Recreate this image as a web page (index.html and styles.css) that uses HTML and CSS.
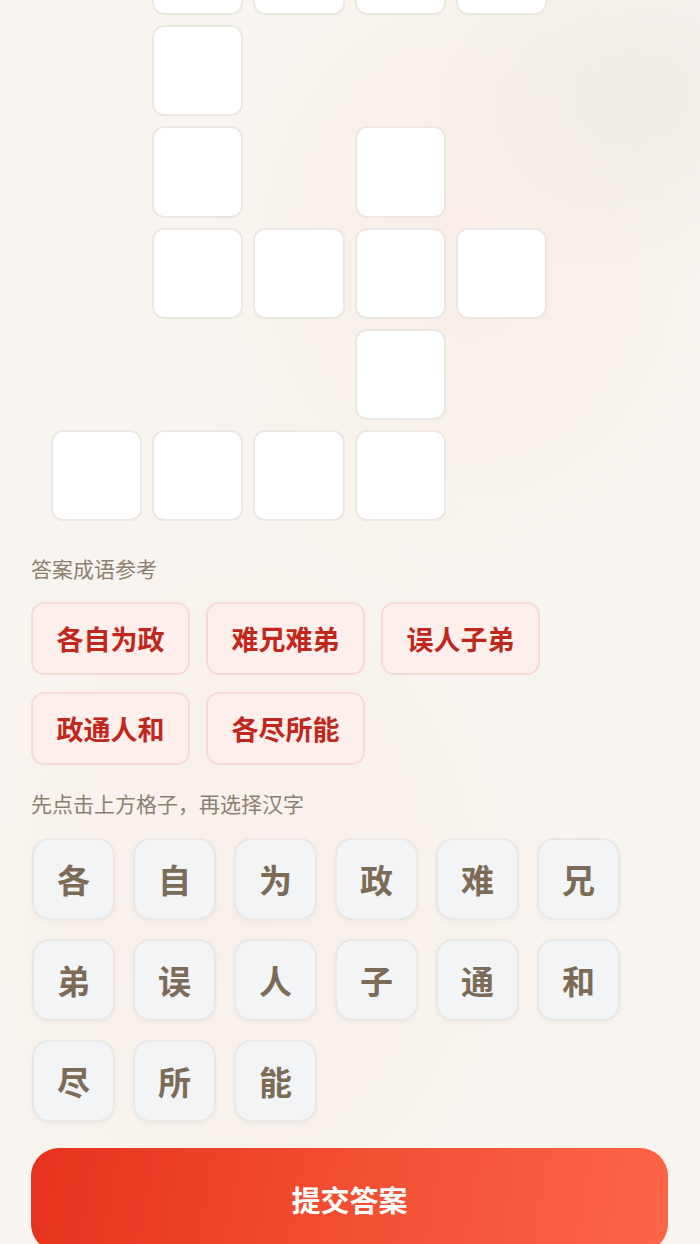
FILE: index.html
```html
<!DOCTYPE html>
<html lang="zh-CN">
<head>
<meta charset="utf-8">
<title>成语填字</title>
<link rel="stylesheet" href="styles.css">
</head>
<body>
<div class="page">
  <div class="board">
    <div class="slot"></div><div class="cell"></div><div class="cell"></div><div class="cell"></div><div class="cell"></div><div class="slot"></div>
    <div class="slot"></div><div class="cell"></div><div class="slot"></div><div class="slot"></div><div class="slot"></div><div class="slot"></div>
    <div class="slot"></div><div class="cell"></div><div class="slot"></div><div class="cell"></div><div class="slot"></div><div class="slot"></div>
    <div class="slot"></div><div class="cell"></div><div class="cell"></div><div class="cell"></div><div class="cell"></div><div class="slot"></div>
    <div class="slot"></div><div class="slot"></div><div class="slot"></div><div class="cell"></div><div class="slot"></div><div class="slot"></div>
    <div class="cell"></div><div class="cell"></div><div class="cell"></div><div class="cell"></div><div class="slot"></div><div class="slot"></div>
  </div>

  <div class="label label-answers">答案成语参考</div>
  <div class="tags">
    <span class="tag">各自为政</span>
    <span class="tag">难兄难弟</span>
    <span class="tag">误人子弟</span>
    <span class="tag">政通人和</span>
    <span class="tag">各尽所能</span>
  </div>

  <div class="label label-pick">先点击上方格子，再选择汉字</div>
  <div class="chars">
    <button class="char">各</button>
    <button class="char">自</button>
    <button class="char">为</button>
    <button class="char">政</button>
    <button class="char">难</button>
    <button class="char">兄</button>
    <button class="char">弟</button>
    <button class="char">误</button>
    <button class="char">人</button>
    <button class="char">子</button>
    <button class="char">通</button>
    <button class="char">和</button>
    <button class="char">尽</button>
    <button class="char">所</button>
    <button class="char">能</button>
  </div>

  <button class="submit">提交答案</button>
</div>
</body>
</html>
```

FILE: styles.css
```css
html, body {
  margin: 0;
  padding: 0;
}
body {
  width: 700px;
  height: 1244px;
  overflow: hidden;
  font-family: "Noto Sans CJK SC", "Noto Sans", sans-serif;
  background:
    radial-gradient(ellipse 240px 200px at 650px 90px, rgba(228, 224, 218, 0.45), rgba(228, 224, 218, 0) 100%),
    radial-gradient(ellipse 300px 360px at 470px 250px, rgba(250, 232, 224, 0.55), rgba(250, 232, 224, 0) 100%),
    radial-gradient(ellipse 380px 500px at 250px 900px, rgba(250, 234, 228, 0.5), rgba(250, 234, 228, 0) 100%),
    #f8f5f0;
}
.page {
  padding: 0 32px 0 31px;
}
.board {
  margin-top: -76px;
  padding: 0 20px;
  display: grid;
  grid-template-columns: repeat(6, 1fr);
  gap: 10px;
}
.cell {
  aspect-ratio: 1 / 1;
  box-sizing: border-box;
  background: #ffffff;
  border: 2px solid #ebe7e2;
  border-radius: 12px;
}
.slot {
  aspect-ratio: 1 / 1;
}
.label {
  font-size: 21px;
  line-height: 30px;
  color: #8c8072;
}
.label-answers {
  margin-top: 32px;
}
.tags {
  margin-top: 19px;
  display: flex;
  flex-wrap: wrap;
  gap: 17px 16px;
  width: 540px;
}
.tag {
  box-sizing: border-box;
  width: 159px;
  height: 73px;
  display: flex;
  align-items: center;
  justify-content: center;
  background: #fdefeb;
  border: 2px solid #f7dcd6;
  border-radius: 13px;
  color: #c0281d;
  font-size: 27px;
  font-weight: 700;
}
.label-pick {
  margin-top: 23px;
}
.chars {
  margin-top: 20px;
  padding-left: 1px;
  display: flex;
  flex-wrap: wrap;
  gap: 19px 18px;
  width: 600px;
}
.char {
  box-sizing: border-box;
  width: 83px;
  height: 82px;
  padding: 0;
  display: flex;
  align-items: center;
  justify-content: center;
  background: #f2f4f6;
  border: 2px solid #e9e8e6;
  border-radius: 17px;
  box-shadow: 0 2px 4px rgba(120, 100, 80, 0.06);
  color: #7c6b56;
  font-family: "Noto Sans CJK SC", sans-serif;
  font-size: 33px;
  font-weight: 700;
}
.submit {
  display: block;
  margin-top: 26px;
  width: 637px;
  height: 104px;
  border: none;
  border-radius: 28px;
  background: linear-gradient(100deg, #e6321c 0%, #f14c30 45%, #fd6548 100%);
  color: #ffffff;
  font-family: "Noto Sans CJK SC", sans-serif;
  font-size: 29px;
  font-weight: 700;
  padding: 0 0 2px;
}
```
